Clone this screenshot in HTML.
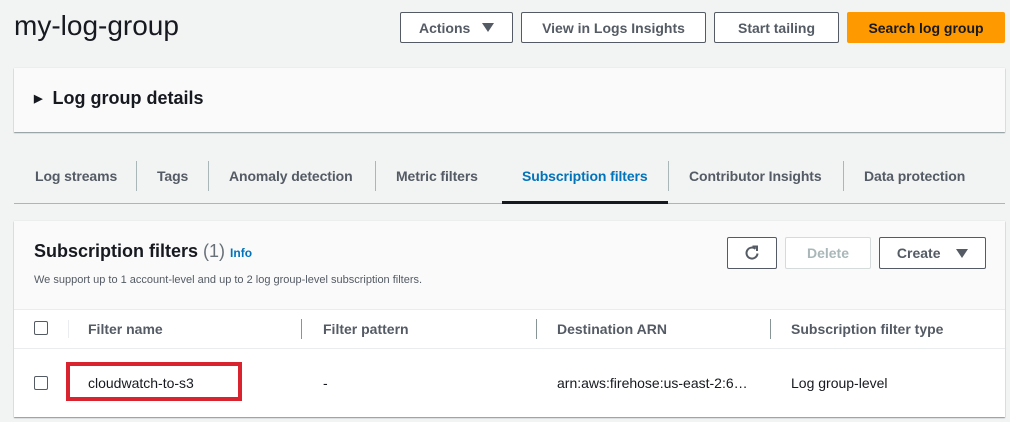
<!DOCTYPE html>
<html><head><style>
*{box-sizing:border-box;margin:0;padding:0}
body{width:1010px;height:422px;background:#f2f3f3;font-family:"Liberation Sans",sans-serif;color:#16191f;position:relative;overflow:hidden}
.a{position:absolute}
.btn{position:absolute;border:1px solid #545b64;background:#fff;font-weight:bold;font-size:14px;color:#545b64;display:flex;align-items:center;justify-content:center;border-radius:2px}
.tab{position:absolute;top:168px;font-size:14px;font-weight:bold;color:#545b64;letter-spacing:-0.1px}
.sep{position:absolute;top:161px;width:1px;height:30px;background:#aab7b8}
.th{position:absolute;top:321px;font-size:14px;font-weight:bold;color:#545b64}
.cb{position:absolute;width:14px;height:14px;border:1px solid #545b64;border-radius:2px;background:#fff}
.tri{display:inline-block;width:0;height:0;border-left:6px solid transparent;border-right:6px solid transparent;border-top:9px solid #545b64}
</style></head><body>
<div class="a" style="left:14px;top:10px;font-size:28px;color:#16191f">my-log-group</div>
<div class="btn" style="left:400px;top:12px;width:113px;height:31px">Actions&nbsp;&nbsp;&nbsp;<span class="tri"></span></div>
<div class="btn" style="left:521px;top:12px;width:185px;height:31px">View in Logs Insights</div>
<div class="btn" style="left:714px;top:12px;width:125px;height:31px">Start tailing</div>
<div class="btn" style="left:847px;top:12px;width:158px;height:31px;background:#ff9900;border-color:#ff9900;color:#16191f">Search log group</div>

<div class="a" style="left:14px;top:68px;width:991px;height:64px;background:#fafafa;box-shadow:0 1px 1px #879596,0 0 1px #d5dbdb"></div>
<div class="a" style="left:34px;top:88px;font-size:18px;font-weight:bold"><span style="font-size:11px;position:relative;top:-2px">▶</span>&nbsp; Log group details</div>

<div class="tab" style="left:35px">Log streams</div><div class="sep" style="left:136px"></div>
<div class="tab" style="left:157px">Tags</div><div class="sep" style="left:208px"></div>
<div class="tab" style="left:229px">Anomaly detection</div><div class="sep" style="left:375px"></div>
<div class="tab" style="left:396px">Metric filters</div>
<div class="tab" style="left:522px;color:#0073bb">Subscription filters</div><div class="sep" style="left:668px"></div>
<div class="tab" style="left:689px">Contributor Insights</div><div class="sep" style="left:843px"></div>
<div class="tab" style="left:864px">Data protection</div>
<div class="a" style="left:14px;top:203px;width:991px;height:1px;background:#aab7b8"></div>
<div class="a" style="left:502px;top:201px;width:166px;height:3px;background:#16191f"></div>

<div class="a" style="left:14px;top:221px;width:991px;height:196px;background:#fff;box-shadow:0 1px 1px #879596,0 0 1px #d5dbdb"></div>
<div class="a" style="left:14px;top:221px;width:991px;height:88px;background:#fafafa"></div>
<div class="a" style="left:34px;top:241px;font-size:18px;font-weight:bold">Subscription filters <span style="font-weight:normal;color:#687078">(1)</span> <span style="font-size:12px;color:#0073bb">Info</span></div>
<div class="a" style="left:34px;top:274px;font-size:11px;color:#545b64">We support up to 1 account-level and up to 2 log group-level subscription filters.</div>
<div class="btn" style="left:727px;top:237px;width:50px;height:32px"><svg width="18" height="18" viewBox="0 0 18 18"><path d="M14.5 9.5A5.5 5.5 0 1 1 12.5 4.8" fill="none" stroke="#545b64" stroke-width="2"/><path d="M9.5 2.5H14V7" fill="none" stroke="#545b64" stroke-width="2"/></svg></div>
<div class="btn" style="left:785px;top:237px;width:86px;height:32px;border-color:#d5dbdb;color:#aab7b8">Delete</div>
<div class="btn" style="left:879px;top:237px;width:107px;height:32px">Create&nbsp;&nbsp;&nbsp;&nbsp;<span class="tri"></span></div>

<div class="a" style="left:14px;top:309px;width:991px;height:1px;background:#eaeded"></div>
<div class="a" style="left:14px;top:348px;width:991px;height:1px;background:#eaeded"></div>
<div class="cb" style="left:34px;top:321px"></div>
<div class="a" style="left:68px;top:320px;width:1px;height:18px;background:#eaeded"></div>
<div class="th" style="left:88px">Filter name</div>
<div class="a" style="left:301px;top:319px;width:1px;height:20px;background:#879596"></div>
<div class="th" style="left:323px">Filter pattern</div>
<div class="a" style="left:536px;top:319px;width:1px;height:20px;background:#879596"></div>
<div class="th" style="left:557px">Destination ARN</div>
<div class="a" style="left:770px;top:319px;width:1px;height:20px;background:#879596"></div>
<div class="th" style="left:791px">Subscription filter type</div>

<div class="cb" style="left:34px;top:376px"></div>
<div class="a" style="left:66px;top:362px;width:176px;height:39px;border:4px solid #d9232e"></div>
<div class="a" style="left:88px;top:375px;font-size:14px">cloudwatch-to-s3</div>
<div class="a" style="left:323px;top:375px;font-size:14px">-</div>
<div class="a" style="left:557px;top:375px;font-size:14px">arn:aws:firehose:us-east-2:6…</div>
<div class="a" style="left:791px;top:375px;font-size:14px">Log group-level</div>
</body></html>
